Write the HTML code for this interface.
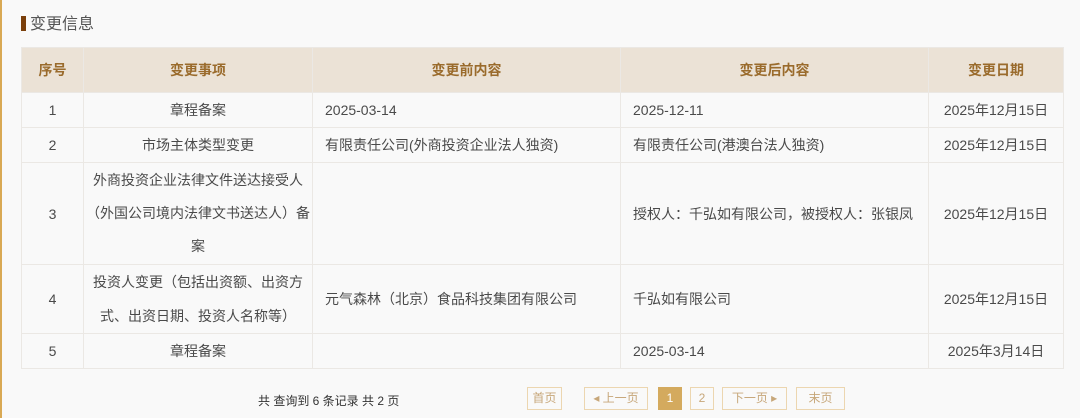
<!DOCTYPE html>
<html><head><meta charset="utf-8"><style>
body{margin:0;width:1080px;height:418px;background:#f9f9f9;font-family:"Liberation Sans","Noto Sans CJK SC",sans-serif;position:relative;overflow:hidden;color:#4a4a4a}
.lb{position:absolute;left:0;top:0;width:2px;height:418px;background:#d9a954}
.title{position:absolute;left:21px;top:15px;font-size:16px;color:#555;line-height:20px}
.title:before{content:"";display:inline-block;width:5px;height:15px;background:#7a3f0b;vertical-align:-2px;margin-right:4px}
table{position:absolute;left:21px;top:47px;border-collapse:collapse;font-size:14px;width:1042px;table-layout:fixed}
td,th{border:1px solid #ebe8e4;padding:0 12px;line-height:26px}
th{background:#ebe2d6;color:#9a6b2c;font-weight:bold;height:44px;text-align:center}
td{height:34px}
td.c{text-align:center}
.pg{position:absolute;top:387px;height:21px;border:1px solid #ecd6b0;color:#c7a77a;font-size:12px;line-height:21px;text-align:center;box-sizing:content-box}
.info{position:absolute;left:258px;top:392px;font-size:12px;color:#333}
</style></head><body>
<div class="lb"></div>
<div class="title">变更信息</div>
<table>
<colgroup><col style="width:62px"><col style="width:229px"><col style="width:308px"><col style="width:308px"><col style="width:135px"></colgroup>
<tr><th>序号</th><th>变更事项</th><th>变更前内容</th><th>变更后内容</th><th>变更日期</th></tr>
<tr><td class="c">1</td><td class="c">章程备案</td><td>2025-03-14</td><td>2025-12-11</td><td class="c">2025年12月15日</td></tr>
<tr><td class="c">2</td><td class="c">市场主体类型变更</td><td>有限责任公司(外商投资企业法人独资)</td><td>有限责任公司(港澳台法人独资)</td><td class="c">2025年12月15日</td></tr>
<tr><td class="c" style="height:101px">3</td><td class="c" style="line-height:33px;white-space:nowrap;padding:0">外商投资企业法律文件送达接受人<br>（外国公司境内法律文书送达人）备<br>案</td><td></td><td>授权人：千弘如有限公司，被授权人：张银凤</td><td class="c">2025年12月15日</td></tr>
<tr><td class="c" style="height:68px">4</td><td class="c" style="line-height:34px;white-space:nowrap;padding:0">投资人变更（包括出资额、出资方<br>式、出资日期、投资人名称等）</td><td>元气森林（北京）食品科技集团有限公司</td><td>千弘如有限公司</td><td class="c">2025年12月15日</td></tr>
<tr><td class="c">5</td><td class="c">章程备案</td><td></td><td>2025-03-14</td><td class="c">2025年3月14日</td></tr>
</table>
<div class="info">共 查询到 6 条记录 共 2 页</div>
<div class="pg" style="left:527px;width:33px">首页</div>
<div class="pg" style="left:584px;width:62px">◂ 上一页</div>
<div class="pg" style="left:658px;width:22px;background:#d4aa5e;border-color:#d4aa5e;color:#fff">1</div>
<div class="pg" style="left:690px;width:22px">2</div>
<div class="pg" style="left:722px;width:63px">下一页 ▸</div>
<div class="pg" style="left:796px;width:47px">末页</div>
</body></html>
